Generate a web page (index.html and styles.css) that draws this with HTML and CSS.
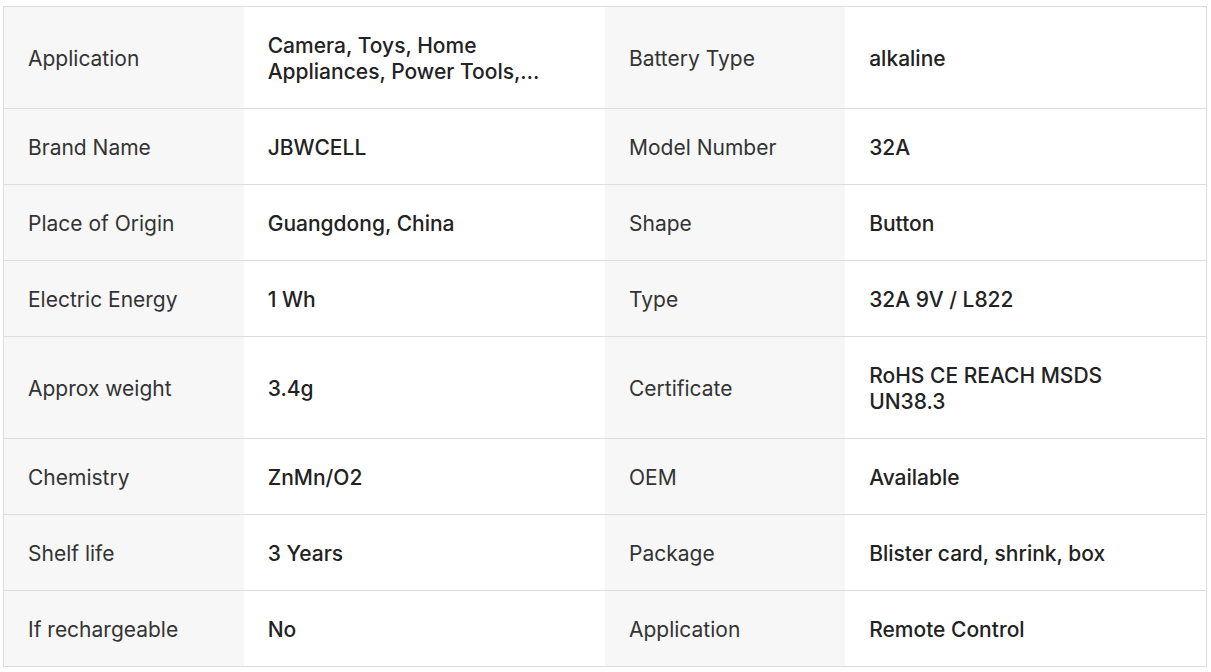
FILE: index.html
```html
<!DOCTYPE html>
<html lang="en">

<head>
    <meta charset="UTF-8">
    <meta name="viewport" content="width=device-width, initial-scale=1.0">
    <title>Key attributes</title>
    <link rel="stylesheet" href="styles.css">
</head>

<body>
    <table class="attr-table">
        <tr>
            <td class="attr-name">Application</td>
            <td class="attr-value"><div class="clamp">Camera, Toys, Home Appliances, Power Tools, Remote Control</div></td>
            <td class="attr-name">Battery Type</td>
            <td class="attr-value">alkaline</td>
        </tr>
        <tr>
            <td class="attr-name">Brand Name</td>
            <td class="attr-value">JBWCELL</td>
            <td class="attr-name">Model Number</td>
            <td class="attr-value">32A</td>
        </tr>
        <tr>
            <td class="attr-name">Place of Origin</td>
            <td class="attr-value">Guangdong, China</td>
            <td class="attr-name">Shape</td>
            <td class="attr-value">Button</td>
        </tr>
        <tr>
            <td class="attr-name">Electric Energy</td>
            <td class="attr-value">1 Wh</td>
            <td class="attr-name">Type</td>
            <td class="attr-value">32A 9V / L822</td>
        </tr>
        <tr>
            <td class="attr-name">Approx weight</td>
            <td class="attr-value">3.4g</td>
            <td class="attr-name">Certificate</td>
            <td class="attr-value">RoHS CE REACH MSDS UN38.3</td>
        </tr>
        <tr>
            <td class="attr-name">Chemistry</td>
            <td class="attr-value">ZnMn/O2</td>
            <td class="attr-name">OEM</td>
            <td class="attr-value">Available</td>
        </tr>
        <tr>
            <td class="attr-name">Shelf life</td>
            <td class="attr-value">3 Years</td>
            <td class="attr-name">Package</td>
            <td class="attr-value">Blister card, shrink, box</td>
        </tr>
        <tr>
            <td class="attr-name">If rechargeable</td>
            <td class="attr-value">No</td>
            <td class="attr-name">Application</td>
            <td class="attr-value">Remote Control</td>
        </tr>
    </table>
</body>

</html>
```

FILE: styles.css
```css
* {
    padding: 0;
    margin: 0;
    box-sizing: border-box;
}

body {
    padding: 6px 4px 0 3px;
    background-color: #fff;
    font-family: Inter, "Liberation Sans", sans-serif;
    font-size: 21px;
    line-height: 26px;
}

.attr-table {
    width: 1204px;
    border-collapse: collapse;
    border: 1px solid #dddddd;
    table-layout: fixed;
}

.attr-table td {
    padding: 26px 24px 23px 24px;
    border-bottom: 1px solid #dddddd;
    vertical-align: middle;
}

.attr-name {
    width: 240px;
    color: #333;
    background-color: #f7f7f7;
}

.attr-value {
    width: 361px;
    color: #222;
    font-weight: 500;
}

.clamp {
    display: -webkit-box;
    -webkit-box-orient: vertical;
    -webkit-line-clamp: 2;
    overflow: hidden;
}
```
